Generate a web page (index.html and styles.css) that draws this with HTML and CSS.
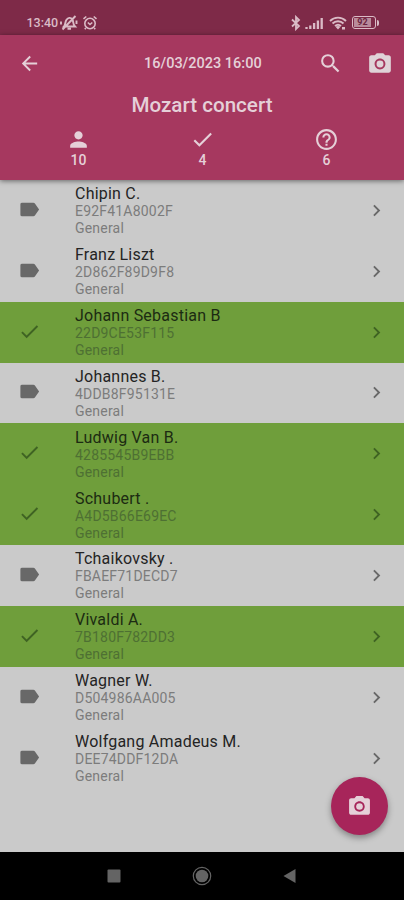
FILE: index.html
```
<!DOCTYPE html>
<html lang="en">
<head>
<meta charset="utf-8">
<title>Mozart concert</title>
<link rel="stylesheet" href="styles.css">
</head>
<body>
<svg class="defs" width="0" height="0" aria-hidden="true">
  <symbol id="label" viewBox="0 0 24 24"><path d="M17.63 5.84C17.27 5.33 16.67 5 16 5L4 5.01C2.900 5.010 2.500 5.900 2.500 6.500v11c0 .9.4 1.490 1.500 1.490L16 19c.67 0 1.27-.33 1.63-.84L22 12l-4.37-6.16z"/></symbol>
  <symbol id="check" viewBox="0 0 24 24"><path d="M9 16.17 4.83 12l-1.42 1.41L9 19 21 7l-1.41-1.41z"/></symbol>
  <symbol id="chevron" viewBox="0 0 24 24"><path d="M10 6 8.59 7.41 13.17 12l-4.58 4.59L10 18l6-6z"/></symbol>
  <symbol id="camera" viewBox="0 0 24 24"><path d="M9 2 7.17 4H4c-1.1 0-2 .9-2 2v12c0 1.1.9 2 2 2h16c1.1 0 2-.9 2-2V6c0-1.1-.9-2-2-2h-3.17L15 2H9zm3 15c-2.76 0-5-2.24-5-5s2.24-5 5-5 5 2.24 5 5-2.24 5-5 5z"/><circle cx="12" cy="12" r="3.2"/></symbol>
</svg>
<div class="screen">
  <div class="status">
    <span class="clock">13:40</span>
    <svg class="mute" viewBox="0 0 18 16"><path d="M4 11.5C5.500 10 5 7 6.500 4.800S10.500 2 12.500 4.500C13.500 6 12.500 9 15 11.500zM7.500 13.800h3.500M15.500 1 2.500 14.500M1 6.500v3M16.500 5.500v3.500"/></svg>
    <svg class="alarm" viewBox="0 0 16 16"><circle cx="8" cy="8.500" r="5.200"/><path d="M1.500 3.800 4.300 1.500M14.500 3.800 11.700 1.500M5.800 7.500 8 9.500l2.300-2M3.800 13l-1 1.200M12.200 13l1 1.200"/></svg>
    <div class="signals">
      <svg class="bt" viewBox="0 0 10 16"><path d="M1 4.500 8 11 5 14V2l3 3-7 6.500"/></svg>
      <svg class="bars" viewBox="0 0 19 14"><path d="M1.500 13v-2M5.300 13V9.500M9.100 13V7M12.900 13V4.500M16.700 13V2"/></svg>
      <svg class="wifi" viewBox="0 0 18 14"><path d="M1 5c4.500-4.500 11.500-4.500 16 0M3.500 7.500c3-3 8-3 11 0M6 10c2-1.800 4-1.800 6 0"/><path class="solid" d="m9 13.500-2.500-2.700q2.500-1.800 5 0zM13 11h3v2.500h-3z"/></svg>
      <div class="battery"><span>92</span></div>
    </div>
  </div>
  <header class="header">
    <div class="toolbar">
      <svg class="back" viewBox="0 0 24 24"><path d="M20 11H7.830l5.590-5.590L12 4l-8 8 8 8 1.410-1.410L7.830 13H20v-2z"/></svg>
      <span class="date">16/03/2023 16:00</span>
      <svg class="search" viewBox="0 0 24 24"><path d="M15.500 14h-.79l-.28-.27A6.471 6.471 0 0 0 16 9.500 6.500 6.500 0 1 0 9.500 16c1.610 0 3.090-.59 4.230-1.570l.27.28v.79l5 4.990L20.490 19l-4.990-5zm-6 0C7.010 14 5 11.990 5 9.500S7.010 5 9.500 5 14 7.010 14 9.500 11.990 14 9.500 14z"/></svg>
      <svg class="shoot"><use href="#camera"/></svg>
    </div>
    <h1>Mozart concert</h1>
    <div class="stats">
      <div class="stat"><svg viewBox="0 0 24 24"><path d="M12 12c2.210 0 4-1.790 4-4s-1.790-4-4-4-4 1.790-4 4 1.790 4 4 4zm0 2c-2.670 0-8 1.340-8 4v2h16v-2c0-2.660-5.330-4-8-4z"/></svg><span>10</span></div>
      <div class="stat"><svg><use href="#check"/></svg><span>4</span></div>
      <div class="stat"><svg viewBox="0 0 24 24"><path d="M11 18h2v-2h-2v2zm1-16C6.480 2 2 6.480 2 12s4.480 10 10 10 10-4.480 10-10S17.520 2 12 2zm0 18c-4.410 0-8-3.590-8-8s3.590-8 8-8 8 3.590 8 8-3.590 8-8 8zm0-14c-2.210 0-4 1.790-4 4h2c0-1.100.9-2 2-2s2 .9 2 2c0 2-3 1.750-3 5h2c0-2.250 3-2.500 3-5 0-2.210-1.790-4-4-4z"/></svg><span>6</span></div>
    </div>
  </header>
  <main class="list">
    <div class="row"><svg class="mark"><use href="#label"/></svg><div class="info"><b>Chipin C.</b><span>E92F41A8002F</span><span>General</span></div><svg class="go"><use href="#chevron"/></svg></div>
    <div class="row"><svg class="mark"><use href="#label"/></svg><div class="info"><b>Franz Liszt</b><span>2D862F89D9F8</span><span>General</span></div><svg class="go"><use href="#chevron"/></svg></div>
    <div class="row checked"><svg class="mark"><use href="#check"/></svg><div class="info"><b>Johann Sebastian B</b><span>22D9CE53F115</span><span>General</span></div><svg class="go"><use href="#chevron"/></svg></div>
    <div class="row"><svg class="mark"><use href="#label"/></svg><div class="info"><b>Johannes B.</b><span>4DDB8F95131E</span><span>General</span></div><svg class="go"><use href="#chevron"/></svg></div>
    <div class="row checked"><svg class="mark"><use href="#check"/></svg><div class="info"><b>Ludwig Van B.</b><span>4285545B9EBB</span><span>General</span></div><svg class="go"><use href="#chevron"/></svg></div>
    <div class="row checked"><svg class="mark"><use href="#check"/></svg><div class="info"><b>Schubert .</b><span>A4D5B66E69EC</span><span>General</span></div><svg class="go"><use href="#chevron"/></svg></div>
    <div class="row"><svg class="mark"><use href="#label"/></svg><div class="info"><b>Tchaikovsky .</b><span>FBAEF71DECD7</span><span>General</span></div><svg class="go"><use href="#chevron"/></svg></div>
    <div class="row checked"><svg class="mark"><use href="#check"/></svg><div class="info"><b>Vivaldi A.</b><span>7B180F782DD3</span><span>General</span></div><svg class="go"><use href="#chevron"/></svg></div>
    <div class="row"><svg class="mark"><use href="#label"/></svg><div class="info"><b>Wagner W.</b><span>D504986AA005</span><span>General</span></div><svg class="go"><use href="#chevron"/></svg></div>
    <div class="row"><svg class="mark"><use href="#label"/></svg><div class="info"><b>Wolfgang Amadeus M.</b><span>DEE74DDF12DA</span><span>General</span></div><svg class="go"><use href="#chevron"/></svg></div>
  </main>
  <button class="fab" aria-label="Camera"><svg><use href="#camera"/></svg></button>
  <nav class="nav">
    <svg viewBox="0 0 20 20"><rect x="3.500" y="3.500" width="13" height="13" rx="1"/></svg>
    <svg viewBox="0 0 20 20"><circle cx="10" cy="10" r="6.300"/><circle class="ring" cx="10" cy="10" r="8.700"/></svg>
    <svg viewBox="0 0 20 20"><path d="M3.500 10 15.500 3v14z"/></svg>
  </nav>
</div>
</body>
</html>
```
FILE: styles.css
```
* { box-sizing: border-box; }
body { margin: 0; font-family: Roboto, "Liberation Sans", sans-serif; }
svg { display: block; fill: currentColor; flex: none; }
.defs { position: absolute; }
.screen { position: relative; width: 404px; height: 900px; display: flex; flex-direction: column; background: #cacaca; overflow: hidden; }

.status { height: 34.500px; flex: none; display: flex; align-items: center; padding: 11px 25px 0 26.500px; background: #7e2a48; color: #dabbc6; }
.status svg { fill: none; stroke: currentColor; stroke-width: 1.600; }
.clock { font-size: 12.500px; font-weight: 500; width: 33px; line-height: 16px; }
.status .mute { width: 18px; height: 16px; stroke-width: 1.900; }
.status .alarm { width: 16px; height: 16px; margin-left: 4px; }
.signals { margin-left: auto; display: flex; align-items: center; }
.status .bt { width: 10px; height: 16px; margin-right: 4px; stroke-width: 1.800; }
.status .bars { width: 19px; height: 14px; margin-right: 5px; stroke-width: 2.300; }
.status .wifi { width: 18px; height: 14px; margin-right: 5px; stroke-width: 1.900; }
.status .wifi .solid { fill: currentColor; stroke: none; }
.battery { position: relative; width: 24px; height: 13px; border: 1.500px solid currentColor; border-radius: 3px; margin-right: 3px; padding: 1px; }
.battery span { display: block; width: 17px; height: 100%; background: #b98b9b; color: #6b2440; font-size: 9px; line-height: 9px; font-weight: 700; text-align: center; }
.battery::after { content: ""; position: absolute; right: -4px; top: 2.500px; width: 2px; height: 6px; background: currentColor; border-radius: 0 2px 2px 0; }

.header { position: relative; z-index: 1; height: 145.500px; flex: none; background: #a6385f; color: #e5d0d8; box-shadow: 0 1px 5px rgba(0,0,0,.5); }
.toolbar { height: 58px; display: grid; grid-template-columns: 58px 1fr 46px 48px; align-items: center; }
.toolbar svg { width: 23px; height: 23px; justify-self: center; }
.toolbar .search { width: 25px; height: 25px; justify-self: start; margin-left: 8px; }
.toolbar .shoot { width: 26px; height: 26px; color: #dfd3d8; }
.toolbar .date { padding-left: 86px; font-size: 14.500px; font-weight: 500; white-space: nowrap; }
h1 { margin: 0; text-align: center; font-size: 20.600px; line-height: 24px; font-weight: 500; }
.stats { display: grid; grid-template-columns: 157px 91px 157px; padding-top: 10px; }
.stat { display: flex; flex-direction: column; align-items: center; font-size: 14px; font-weight: 500; line-height: 18px; }
.stat svg { width: 25px; height: 25px; margin-bottom: -1px; }

.row { height: 60.850px; display: flex; align-items: center; padding: 0 16.500px 0 18px; color: #686868; }
.row.checked { background: #6f9e3b; color: #3f6323; }
.mark { width: 23px; height: 23px; margin-top: -2px; }
.info { flex: 1; padding-left: 34px; padding-top: 2px; display: flex; flex-direction: column; font-size: 14px; line-height: 17px; color: #7c7c7c; letter-spacing: .2px; }
.info b { font-size: 16px; line-height: 18px; font-weight: 400; color: #242424; letter-spacing: .22px; }
.checked .info { color: #4e7033; }
.checked .info b { color: #1c2b12; }
.go { width: 23px; height: 23px; }

.fab { position: absolute; left: 331px; top: 777px; width: 57px; height: 58px; padding: 0; border: 0; border-radius: 50%; background: #a7255a; color: #e5d0d8; display: grid; place-items: center; box-shadow: 0 3px 6px rgba(0,0,0,.35); }
.fab svg { width: 25px; height: 25px; }

.nav { margin-top: auto; height: 48px; flex: none; background: #000; color: #646464; display: flex; justify-content: space-between; padding: 14px 104px 0 104px; }
.nav svg { width: 20px; height: 20px; }
.nav .ring { fill: none; stroke: currentColor; stroke-width: 1.200; }
```
